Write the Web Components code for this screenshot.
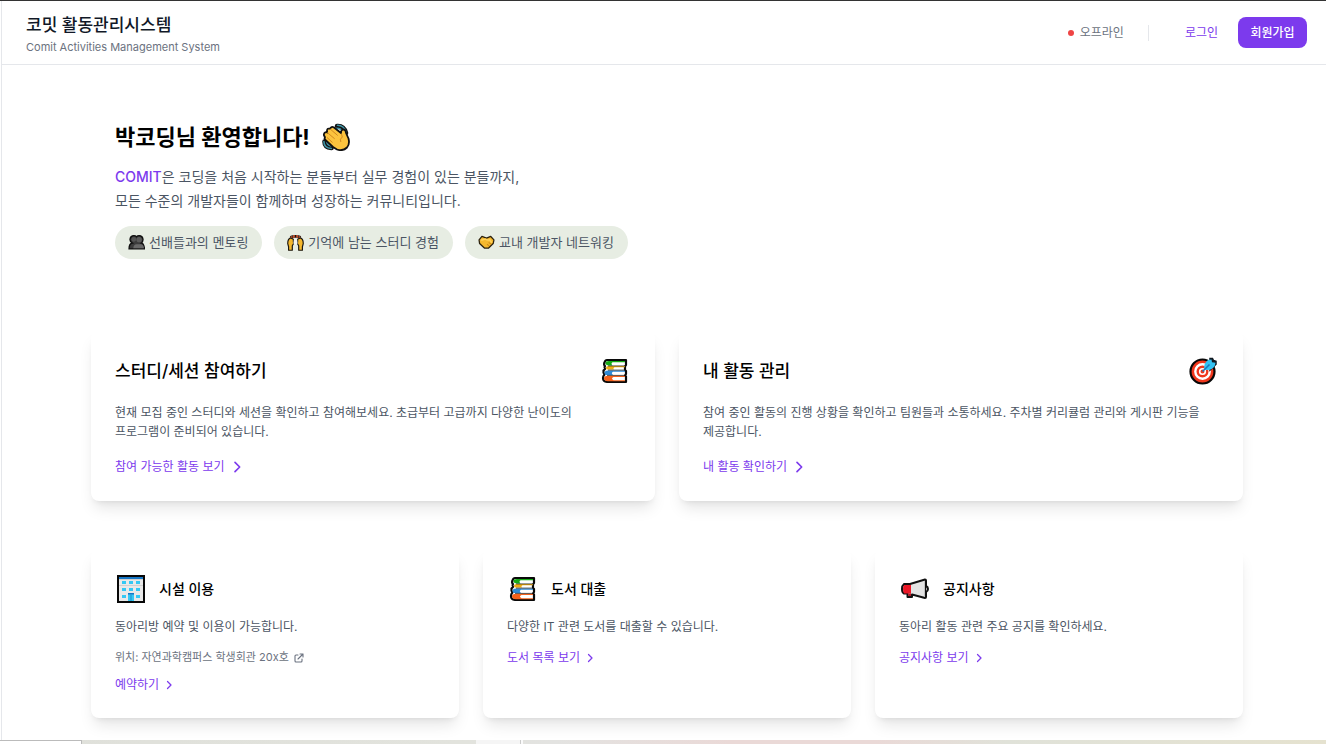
<!DOCTYPE html>
<html lang="ko">
<head>
<meta charset="utf-8">
<title>코밋 활동관리시스템</title>
<style>
html,body{margin:0;min-height:100vh}
body{font-family:Inter,"Noto Sans CJK KR",sans-serif;font-size:12px;line-height:19px;color:#000;background:#fff;overflow-x:hidden}
</style>
</head>
<body>
<comit-app></comit-app>
<script>
const ICONS = {
wave:`<svg viewBox="0 0 28 28"><g fill="none" stroke="#111" stroke-width="4.600" stroke-linecap="round"><path d="M15 3q7-.5 9 7M2.500 18.500q0 6 7 6.500"/></g><g fill="none" stroke="#3f93a5" stroke-width="1.600" stroke-linecap="round"><path d="M15.500 2.300q6.500 0 8.500 7M1.900 18.500q0 6.500 7.500 7M14.500 5.200q5 0 7 4.300M4.700 18q0 4 4.500 5"/></g><path d="M2.200 10.500q1-2 3-1L5 7.500q.2-2.500 3-1.800Q9.300 3 12 4.500l7 5.500q0-3.700 2.800-3.500 2 .2 2.200 3.500l2.500 5.500q1.500 5.500-1.500 9-4 4-10 2l-4-2.500-7.500-7q-1.500-1.200-.5-2.800L2.300 13q-.8-1.200-.1-2.500z" fill="#fcc43e" stroke="#111" stroke-width="1.800" stroke-linejoin="round"/><path d="M5.200 9.500l7.500 6.300M8.200 6l7.500 6.500M5 14.500l5.500 5M19.500 11l.8 3q-3 2-1.500 5" fill="none" stroke="#d38a20" stroke-width="1"/></svg>`,
people:`<svg viewBox="0 0 16 16"><path d="M1 14q0-5 3-5.500Q1.500 7 2 4.500 2.500 1.500 5.500 1.500q1.500 0 2.500 1 1-1 2.500-1 3 0 3.500 3Q14.500 7 12.500 8.500q2.500.5 3 5.500z" fill="#3b3b3b" stroke="#111" stroke-width="1.300"/><circle cx="5.500" cy="5" r="2.200" fill="#555"/><circle cx="10.500" cy="5.300" r="2.500" fill="#5b5b5b"/><path d="M5 13.500q0-3.500 3-3.800h4q3 .3 3 3.800z" fill="#686868"/></svg>`,
hands:`<svg viewBox="0 0 16 16"><path d="M3.500 3.500l1.500-1M6.500 1v2.500M9.500 1v2.500M12.500 3.500l-1.500-1" stroke="#111" stroke-width="3"/><path d="M3.500 3.500l1.500-1M6.500 1v2.500M9.500 1v2.500M12.500 3.500l-1.500-1" stroke="#ce5630" stroke-width="1.600"/><path d="M1.500 15.300V12L.7 9q0-4.500 2.800-5.300L6 5v2l.2 2L5 11v4.300zM14.500 15.300V12l.8-3q0-4.500-2.800-5.300L10 5v2l-.2 2 1.200 2v4.300z" fill="#f5b82d" stroke="#1b1710" stroke-width="1.100" stroke-linejoin="round"/><path d="M6.500 5h3l.5 4-2 1-2-1z" fill="#f5f5ee"/></svg>`,
shake:`<svg viewBox="0 0 16 16"><path d="M1 5.500l2.700-3.200L8 3.800l4-1.500 3 3.200-.7 3.500-4.300 4.200H6L1.500 9z" fill="#f5b82d" stroke="#2b210d" stroke-width="1.200" stroke-linejoin="round"/><path d="M3 5.800l4-1q2 1.500 4 .5l2 3" fill="none" stroke="#ffd35c" stroke-width="1.500"/><path d="M10 8l2.500 1.500M8.500 9.500l2 2" stroke="#ce8916"/></svg>`,
books:`<svg viewBox="0 0 28 28"><path d="M6 3h19v5l-1 1.500v3.500l1 1v3l-1 1.500 1 1V25H6q-4-.5-4-4 0-2 1.500-3.500Q2 16 2.500 13.500L4 12q-1.200-1.500 0-3-1.500-1-.5-3.500Q4.300 3 6 3z" fill="#fff" stroke="#090909" stroke-width="2.200" stroke-linejoin="round"/><path d="M24 4H8Q4.500 4 4.500 6T8 8.500h3.500Q9.500 6.500 11.500 5.300H24z" fill="#16ab16"/><path d="M24 9H8q-3 0-3 2t3 1.500h5q-1.500-1.300.5-2.200H24z" fill="#efad14"/><path d="M24 13.500H7q-3.500.3-3.500 2.500T7 18h5q-2.300-1.800 0-3.200h12z" fill="#2e8ad6"/><path d="M24 18.800H7q-4 .2-4 2.700t4 2.700h17v-1H12.500q-3-1.700 0-3.200H24z" fill="#f4611b"/><path d="M7 8.900h17M7 13.100h17M6 18.400h18" stroke="#111" stroke-width=".7"/></svg>`,
target:`<svg viewBox="0 0 28 28"><circle cx="13.500" cy="14.500" r="12" fill="#f0371c" stroke="#080808" stroke-width="2.200"/><circle cx="13.500" cy="14.500" r="7.200" fill="none" stroke="#fff" stroke-width="2.400"/><circle cx="13.500" cy="14.500" r="2.800" fill="none" stroke="#fff" stroke-width="1.600"/><path d="M21 1.500h2.500l1 2 2.500.7v3L21 13z" fill="#101820" stroke="#101820" stroke-width="1.500"/><path d="M15.500 12.500Q14 6.500 19 3l3.500-.5.5 2.700 3.500.5-.7 3Q22 14.500 15.500 12.500z" fill="#34c2f2"/><path d="M13.500 14.500l7-7" stroke="#1979bd" stroke-width="1.600"/></svg>`,
building:`<svg viewBox="0 0 28 28"><path d="M1 1h26v26H1z" fill="#e9e9e9" stroke="#080808" stroke-width="2"/><path d="M2 2h24v2H2z" fill="#1677c6"/><path d="M2 4h24v1H2zM2 10h24v1H2z" fill="#d0d0d0"/><path d="M5 6h4v3H5zm7 0h4v3h-4zm7 0h4v3h-4zM5 13h4v3H5zm7 0h4v3h-4zm7 0h4v3h-4zM5 20h4v3H5zm14 0h4v3h-4zM11 19h6v7h-6z" fill="#35c8f4"/><path d="M11 18h6v1.500h-6z" fill="#1677c6"/><path d="M14 20v6" stroke="#1b91ce"/></svg>`,
horn:`<svg viewBox="0 0 28 28"><path d="M3 9h6L24 4.500q1 0 1 1V11q2 1 2 3t-2 3v5q0 1-1 1L11 19.500V22H6.500v-3.500H3q-2-1-2-4.500T3 9z" fill="#e3e3e3" stroke="#111" stroke-width="2" stroke-linejoin="round"/><path d="M3.200 10H10v8.500H3.200Q2 17 2 14t1.200-4z" fill="#eb1726"/><path d="M7.200 18.500H10V21H7.200z" fill="#b51825"/><path d="M24.500 6v15" stroke="#111" stroke-width="1.300"/></svg>`,
chevron:`<svg viewBox="0 0 24 24" fill="none" stroke="currentColor" stroke-width="2.500" stroke-linecap="round" stroke-linejoin="round"><path d="M9 5l7 7-7 7"/></svg>`,
external:`<svg viewBox="0 0 24 24" fill="none" stroke="currentColor" stroke-width="2.200" stroke-linecap="round" stroke-linejoin="round"><path d="M10 6H6a2 2 0 00-2 2v10a2 2 0 002 2h10a2 2 0 002-2v-4M14 4h6v6M10 14L20 4"/></svg>`
};
const define = (name, render) => customElements.define(name, class extends HTMLElement {
  connectedCallback() {
    if (this.shadowRoot) return;
    this.attachShadow({mode: 'open'}).innerHTML = render(this);
  }
});

define('ui-icon', el => `<style>
:host{display:block;flex:none;width:var(--icon-size,28px);height:var(--icon-size,28px)}
svg{display:block;width:100%;height:100%}
</style>${ICONS[el.getAttribute('name')]}`);

define('more-link', el => `<style>
:host{display:flex;line-height:var(--link-line,19px)}
a{display:inline-flex;align-items:center;gap:var(--link-gap,4px);color:#7c3aed;text-decoration:none}
</style><a href="#"><slot></slot><ui-icon name="chevron"></ui-icon></a>`);

define('status-dot', () => `<style>
:host{display:flex;align-items:center;gap:6px;color:#6b7280}
i{width:6px;height:6px;border-radius:50%;background:#ef4444}
</style><i></i><span><slot></slot></span>`);

define('site-header', () => `<style>
:host{display:flex;align-items:center;justify-content:space-between;box-sizing:border-box;height:64px;padding:0 19px 0 24px;border-bottom:1px solid #e5e7eb}
h1{margin:0;font-size:17px;line-height:28px;font-weight:500;color:#111827}
p{margin:0;font-size:11px;line-height:16px;color:#6b7280}
nav{display:flex;align-items:center}
.sep{width:1px;height:16px;background:#e5e7eb;margin:0 36px 0 24px}
a{color:#7c3aed;text-decoration:none;margin-right:20px}
button{font:inherit;font-weight:500;color:#fff;background:#7c3aed;border:0;border-radius:8px;padding:6px 12px;min-width:69px}
</style>
<div><h1>코밋 활동관리시스템</h1><p>Comit Activities Management System</p></div>
<nav><status-dot>오프라인</status-dot><span class="sep"></span><a href="#">로그인</a><button type="button">회원가입</button></nav>`);

define('feature-pill', el => `<style>
:host{display:flex;align-items:center;gap:4px;padding:6px 14px 6px 13px;border-radius:20px;background:#e7ede3;color:#4b5563;font-size:13px;line-height:21px;--icon-size:17px}
</style><ui-icon name="${el.getAttribute('icon')}"></ui-icon><span><slot></slot></span>`);

define('welcome-hero', () => `<style>
:host{display:block;padding:56px 24px 24px}
h2{display:flex;align-items:center;gap:12px;margin:0 0 12px;font-size:22px;line-height:32px;font-weight:700}
p{margin:0 0 13px;font-size:14px;line-height:24px;color:#4b5563}
b{font-weight:500;color:#7c3aed}
.pills{display:flex;flex-wrap:wrap;gap:12px}
</style>
<h2>박코딩님 환영합니다! <ui-icon name="wave"></ui-icon></h2>
<p><b>COMIT</b>은 코딩을 처음 시작하는 분들부터 실무 경험이 있는 분들까지,<br>모든 수준의 개발자들이 함께하며 성장하는 커뮤니티입니다.</p>
<div class="pills"><feature-pill icon="people">선배들과의 멘토링</feature-pill><feature-pill icon="hands">기억에 남는 스터디 경험</feature-pill><feature-pill icon="shake">교내 개발자 네트워킹</feature-pill></div>`);

const cardBase = `:host{display:block;padding:24px;border-radius:8px;background:#fff;box-shadow:0 10px 15px -3px rgba(0,0,0,.1),0 4px 6px -4px rgba(0,0,0,.1)}
header{display:flex;align-items:center;height:32px}h3{margin:0}p{margin:0;color:#4b5563}`;

define('action-card', el => `<style>${cardBase}
header{justify-content:space-between;padding-right:2px;margin-bottom:16px}
h3{font-size:17px;line-height:28px;font-weight:500}
p{padding-right:12px;word-break:keep-all}
more-link{margin-top:16px;--link-line:20px;--link-gap:4px;--icon-size:16px}
</style><header><h3>${el.getAttribute('heading')}</h3><ui-icon name="${el.getAttribute('icon')}"></ui-icon></header><p><slot></slot></p><more-link>${el.getAttribute('link')}</more-link>`);

define('info-card', el => `<style>${cardBase}
header{gap:14px;padding-left:2px;margin-bottom:12px}
h3{font-size:14px;line-height:24px;font-weight:500}
more-link{margin-top:12px;--icon-size:12px}
::slotted(place-note){margin-top:12px}
slot[name=note]{display:block}
:host([noted]) more-link{margin-top:8px}
</style><header><ui-icon name="${el.getAttribute('icon')}"></ui-icon><h3>${el.getAttribute('heading')}</h3></header><p><slot></slot></p><slot name="note"></slot><more-link>${el.getAttribute('link')}</more-link>`);

define('place-note', () => `<style>
:host{display:flex;font-size:11px;line-height:19px}
a{display:flex;align-items:center;gap:4px;color:#6b7280;text-decoration:none;--icon-size:12px}
</style><a href="#"><slot></slot><ui-icon name="external"></ui-icon></a>`);

define('page-backdrop', () => `<style>
:host{display:flex;height:4px;background:linear-gradient(90deg,#dfe0da 0,#e2e3dd 35%,#e3e3e1 42%,#ead9d7 55%,#ead9d7 66%,#e0e2d9 76%,#e5e2cf 100%)}
.a{box-sizing:border-box;width:82px;background:#fff;border:solid #bbb;border-width:1px 1px 0 0}
.b{width:44px;margin-left:394px;background:#f5f5f5;border-right:1px solid #ccc}
.c{width:2px;background:#fafafa}
</style><span class="a"></span><span class="b"></span><span class="c"></span>`);

define('comit-app', () => `<style>
:host{display:flex;flex-direction:column;min-height:100vh;box-sizing:border-box;border-top:1px solid #333}
.page{flex:1;margin-left:1px;border-left:1px solid #e5e7eb;padding-bottom:22px}
main{max-width:1152px;margin:0 auto;padding-left:6px}
.two,.three{display:grid;gap:24px;margin-top:48px}
.two{grid-template-columns:repeat(2,1fr)}
.three{grid-template-columns:repeat(3,1fr)}
</style>
<div class="page"><site-header></site-header>
<main><welcome-hero></welcome-hero>
<section class="two">
<action-card icon="books" heading="스터디/세션 참여하기" link="참여 가능한 활동 보기">현재 모집 중인 스터디와 세션을 확인하고 참여해보세요. 초급부터 고급까지 다양한 난이도의 프로그램이 준비되어 있습니다.</action-card>
<action-card icon="target" heading="내 활동 관리" link="내 활동 확인하기">참여 중인 활동의 진행 상황을 확인하고 팀원들과 소통하세요. 주차별 커리큘럼 관리와 게시판 기능을 제공합니다.</action-card>
</section>
<section class="three">
<info-card noted icon="building" heading="시설 이용" link="예약하기">동아리방 예약 및 이용이 가능합니다.<place-note slot="note">위치: 자연과학캠퍼스 학생회관 20x호</place-note></info-card>
<info-card icon="books" heading="도서 대출" link="도서 목록 보기">다양한 IT 관련 도서를 대출할 수 있습니다.</info-card>
<info-card icon="horn" heading="공지사항" link="공지사항 보기">동아리 활동 관련 주요 공지를 확인하세요.</info-card>
</section></main></div>
<page-backdrop></page-backdrop>`);
</script>
</body>
</html>
